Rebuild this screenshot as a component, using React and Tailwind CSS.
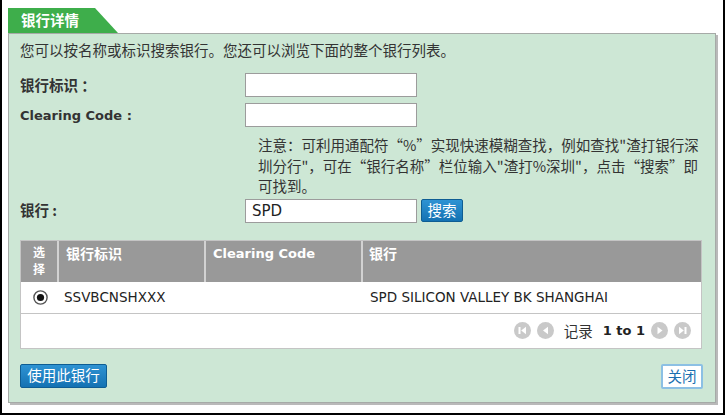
import React from "react";

const cjk = "font-['Microsoft_YaHei','Noto_Sans_CJK_SC',sans-serif]";
const latin = "font-['DejaVu_Sans','Noto_Sans_CJK_SC',sans-serif]";

function PagerIcon({ kind }) {
  // 灰色圆形翻页按钮
  return (
    <svg width="17" height="17" viewBox="0 0 17 17">
      <circle cx="8.5" cy="8.5" r="8.5" fill="#c9c9c9" />
      {kind === "first" && (
        <>
          <rect x="4.5" y="5" width="2" height="7" fill="#fff" />
          <path d="M12 4.8 L7.2 8.5 L12 12.2 Z" fill="#fff" />
        </>
      )}
      {kind === "prev" && <path d="M11 4.8 L6 8.5 L11 12.2 Z" fill="#fff" />}
      {kind === "next" && <path d="M6.5 4.8 L11.5 8.5 L6.5 12.2 Z" fill="#fff" />}
      {kind === "last" && (
        <>
          <path d="M5 4.8 L9.8 8.5 L5 12.2 Z" fill="#fff" />
          <rect x="10.5" y="5" width="2" height="7" fill="#fff" />
        </>
      )}
    </svg>
  );
}

function Radio() {
  return (
    <svg width="15" height="15" viewBox="0 0 15 15">
      <circle cx="7.5" cy="7.5" r="6.6" fill="#fff" stroke="#555" strokeWidth="1.4" />
      <circle cx="7.5" cy="7.5" r="3.6" fill="#111" />
    </svg>
  );
}

const blueBtn =
  "bg-gradient-to-b from-[#2e93d3] to-[#1372b3] border border-[#0e5d93] rounded-[2px] text-white text-[14.5px] leading-none";

export default function App() {
  return (
    <div className={`w-[725px] h-[415px] bg-white border-l-2 border-r-2 border-b-2 border-black pt-[8px] pl-[6px] text-[#333] ${cjk}`}>
      {/* 标签 */}
      <div className="w-[110px] h-[25px] bg-[#3eae4b] [clip-path:polygon(0_0,87px_0,110px_100%,0_100%)] flex items-center pl-[13px]">
        <span className="text-white font-bold text-[14.5px] leading-none">银行详情</span>
      </div>

      {/* 主面板 */}
      <div className="w-[708px] h-[370px] bg-[#cde7d5] border border-[#a6aaa7] shadow-[2px_2px_0_#b9b9b9] pl-[11px] pr-[12px] pt-[6px] flex flex-col">
        <p className="text-[14.5px] leading-[20px]">
          您可以按名称或标识搜索银行。您还可以浏览下面的整个银行列表。
        </p>

        <div className="flex items-center mt-[13px]">
          <label className="w-[225px] font-bold text-[14.5px] leading-none">银行标识 ：</label>
          <input className="w-[172px] h-[24px] bg-white border border-[#9c9c9c]" />
        </div>
        <div className="flex items-center mt-[6px]">
          <label className={`w-[225px] font-bold text-[13px] leading-none ${latin}`}>Clearing Code :</label>
          <input className="w-[172px] h-[24px] bg-white border border-[#9c9c9c]" />
        </div>

        <p className="mt-[8px] ml-[238px] text-[14.5px] leading-[20.5px] whitespace-nowrap">
          注意：可利用通配符“%”实现快速模糊查找，例如查找"渣打银行深
          <br />
          圳分行"，可在“银行名称”栏位输入"渣打%深圳"，点击“搜索”即
          <br />
          可找到。
        </p>

        <div className="flex items-center mt-[2px]">
          <label className="w-[225px] font-bold text-[14.5px] leading-none">银行 :</label>
          <input
            defaultValue="SPD"
            className={`w-[172px] h-[24px] bg-white border border-[#9c9c9c] px-[6px] text-[15px] text-[#222] ${latin}`}
          />
          <button className={`ml-[4px] w-[42px] h-[23px] ${blueBtn}`}>搜索</button>
        </div>

        {/* 表格 */}
        <div className="mt-[17px] w-[682px] border border-[#c4c4c4] bg-white">
          <div className="flex h-[41px] bg-[#999999] text-white font-bold text-[14px]">
            <div className="w-[38px] border-r-2 border-[#d2d2d2] flex flex-col items-center pt-[2px] text-[12px] leading-[17.5px]">
              <span>选</span>
              <span>择</span>
            </div>
            <div className="w-[147px] border-r-2 border-[#d2d2d2] pl-[7px] pt-[3px] leading-[18px]">银行标识</div>
            <div className={`w-[157px] border-r-2 border-[#d2d2d2] pl-[7px] pt-[5px] text-[13px] leading-[16px] ${latin}`}>
              Clearing Code
            </div>
            <div className="flex-1 pl-[6px] pt-[3px] leading-[18px]">银行</div>
          </div>
          <div className={`flex items-center h-[32px] border-b border-[#c4c4c4] text-[13.5px] text-[#222] ${latin}`}>
            <div className="w-[38px] flex justify-center">
              <Radio />
            </div>
            <div className="w-[306px] pl-[5px]">SSVBCNSHXXX</div>
            <div className="flex-1 pl-[5px]">SPD SILICON VALLEY BK SHANGHAI</div>
          </div>
          <div className="flex items-center justify-end h-[34px] pr-[10px] gap-[6px]">
            <PagerIcon kind="first" />
            <PagerIcon kind="prev" />
            <span className="ml-[4px] text-[14.5px]">记录</span>
            <span className={`ml-[4px] font-bold text-[13px] text-[#222] ${latin}`}>1 to 1</span>
            <PagerIcon kind="next" />
            <PagerIcon kind="last" />
          </div>
        </div>

        <div className="flex justify-between mt-[15px]">
          <button className={`w-[87px] h-[24px] ${blueBtn}`}>使用此银行</button>
          <button className="w-[42px] h-[25px] bg-white border-2 border-[#8cc0e4] rounded-[2px] text-[#1b6fb0] text-[14.5px] leading-none">
            关闭
          </button>
        </div>
      </div>
    </div>
  );
}
